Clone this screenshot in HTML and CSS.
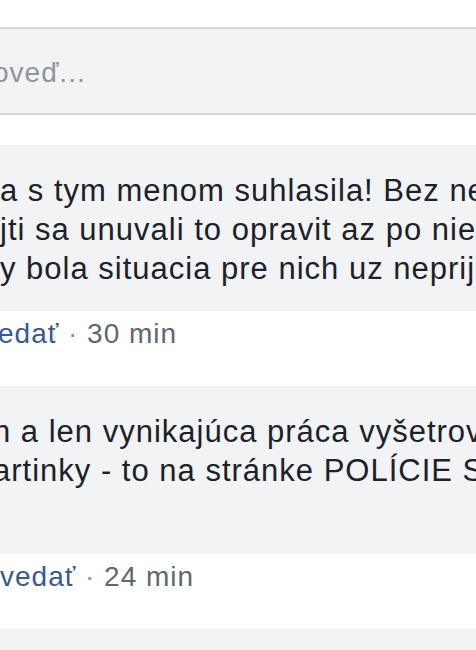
FILE: index.html
```html
<!DOCTYPE html>
<html lang="sk">
<head>
<meta charset="utf-8">
<title>Komentáre</title>
<link rel="stylesheet" href="styles.css">
</head>
<body>
<div class="page">
  <div class="composer">
    <span class="placeholder">oveď...</span>
  </div>

  <div class="comment comment-first">
    <div class="bubble">
      <div class="line">a s tym menom suhlasila! Bez ne</div>
      <div class="line">jti sa unuvali to opravit az po nie</div>
      <div class="line">y bola situacia pre nich uz neprij</div>
    </div>
    <div class="meta"><a class="reply">edať</a><span class="dot"> · </span><span class="time">30 min</span></div>
  </div>

  <div class="comment comment-second">
    <div class="bubble">
      <div class="line">n a len vynikajúca práca vyšetrov</div>
      <div class="line">artinky - to na stránke POLÍCIE S</div>
      <div class="line">&nbsp;</div>
    </div>
    <div class="meta"><a class="reply">vedať</a><span class="dot"> · </span><span class="time">24 min</span></div>
  </div>

  <div class="comment">
    <div class="bubble bubble-next"></div>
  </div>
</div>
</body>
</html>
```

FILE: styles.css
```css
html, body {
  margin: 0;
  padding: 0;
  background: #ffffff;
  overflow: hidden;
}

.page {
  width: 476px;
  height: 650px;
  overflow: hidden;
  font-family: "Liberation Sans", Arial, Helvetica, sans-serif;
  font-size: 31px;
  line-height: 39px;
  letter-spacing: 1px;
  color: #1d2129;
}

.composer {
  margin-top: 27px;
  height: 84px;
  background: #f2f3f5;
  border-top: 2px solid #d5d7db;
  border-bottom: 2px solid #d5d7db;
  display: flex;
  align-items: flex-start;
}

.placeholder {
  display: block;
  margin-top: 24px;
  margin-left: -7px;
  font-size: 28px;
  color: #90949c;
  white-space: nowrap;
}

.comment-first {
  margin-top: 30px;
}

.comment {
  margin-bottom: 33px;
}

.bubble {
  background: #f2f3f5;
  padding: 26px 0 23px;
  overflow: hidden;
  white-space: nowrap;
}

.comment-second .bubble {
  padding-bottom: 25px;
}

.comment-second .line {
  margin-left: -7px;
}

.meta {
  padding-top: 3px;
  font-size: 28px;
  white-space: nowrap;
  color: #90949c;
  margin-left: -2px;
}

.comment-second .meta {
  margin-left: 0;
}

.reply {
  color: #385898;
  text-decoration: none;
}

.dot {
  color: #90949c;
}

.time {
  color: #616770;
}

.bubble-next {
  height: 60px;
  padding: 0;
}
```
